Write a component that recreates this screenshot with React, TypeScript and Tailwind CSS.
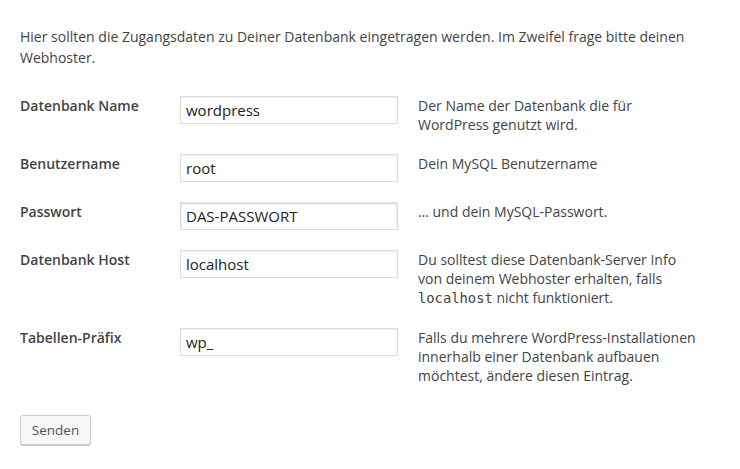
import React from "react";

const rows: { label: string; value: string; desc: React.ReactNode; strong?: boolean }[] = [
  { label: "Datenbank Name", value: "wordpress", desc: "Der Name der Datenbank die für WordPress genutzt wird." },
  { label: "Benutzername", value: "root", desc: "Dein MySQL Benutzername" },
  { label: "Passwort", value: "DAS-PASSWORT", desc: "… und dein MySQL-Passwort.", strong: true },
  {
    label: "Datenbank Host",
    value: "localhost",
    desc: (
      <>
        Du solltest diese Datenbank-Server Info von deinem Webhoster erhalten, falls{" "}
        <code className="font-['DejaVu_Sans_Mono',monospace] text-[13.8px]">localhost</code> nicht funktioniert.
      </>
    ),
  },
  { label: "Tabellen-Präfix", value: "wp_", desc: "Falls du mehrere WordPress-Installationen innerhalb einer Datenbank aufbauen möchtest, ändere diesen Eintrag." },
];

export default function App() {
  return (
    <div className="min-h-[469px] w-[740px] bg-white px-5 font-['Open_Sans',sans-serif] text-[14px] text-[#444]">
      <p className="w-[700px] pt-[26px] leading-[21px]">
        Hier sollten die Zugangsdaten zu Deiner Datenbank eingetragen werden. Im Zweifel frage bitte deinen Webhoster.
      </p>
      <div className="mt-[18px] flex flex-col">
        {rows.map((r) => (
          <div key={r.label} className="flex py-[10px]">
            <div className="w-[160px] shrink-0 font-semibold leading-[19px]">{r.label}</div>
            <div
              className={`flex h-[28px] w-[218px] shrink-0 items-center border border-[#ddd] bg-white px-[5px] text-[15px] text-[#222] ${
                r.strong ? "shadow-[inset_0_1px_2px_rgba(0,0,0,0.18)]" : "shadow-[inset_0_1px_2px_rgba(0,0,0,0.07)]"
              }`}
            >
              {r.value}
            </div>
            <div className="ml-5 w-[284px] leading-[19px]">{r.desc}</div>
          </div>
        ))}
      </div>
      <div className="mt-[20px]">
        <button className="h-[30px] w-[71px] rounded-[3px] border border-[#ccc] bg-[#f7f7f7] text-center text-[13.5px] text-[#555] shadow-[0_1px_0_#ccc]">
          Senden
        </button>
      </div>
    </div>
  );
}
